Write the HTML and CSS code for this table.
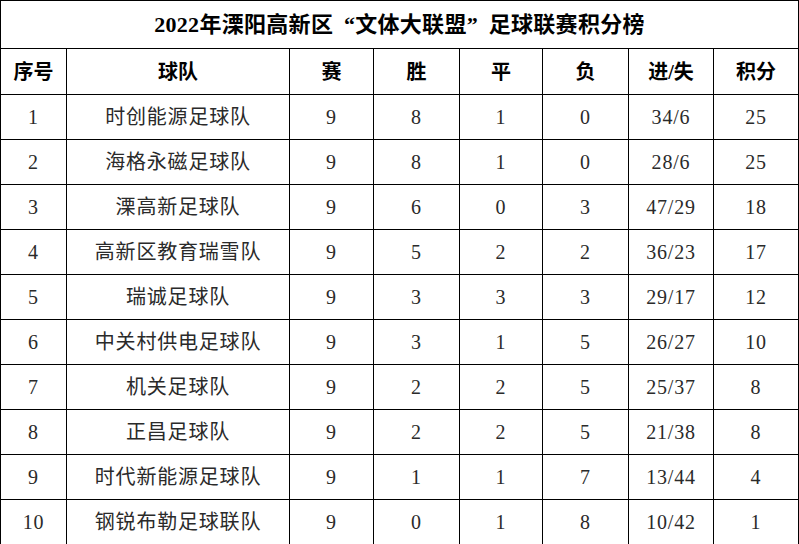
FILE: index.html
```html
<!DOCTYPE html>
<html lang="zh-CN">
<head>
<meta charset="utf-8">
<link rel="stylesheet" href="styles.css">
</head>
<body>
<table class="board">
  <colgroup>
    <col class="c1"><col class="c2"><col class="c3"><col class="c4"><col class="c5"><col class="c6"><col class="c7"><col class="c8">
  </colgroup>
  <tr class="title"><td colspan="8">2022年溧阳高新区<span class="ql">“</span>文体大联盟<span class="qr">”</span>足球联赛积分榜</td></tr>
  <tr class="head"><td>序号</td><td>球队</td><td>赛</td><td>胜</td><td>平</td><td>负</td><td>进/失</td><td>积分</td></tr>
  <tr class="row"><td>1</td><td>时创能源足球队</td><td>9</td><td>8</td><td>1</td><td>0</td><td>34/6</td><td>25</td></tr>
  <tr class="row"><td>2</td><td>海格永磁足球队</td><td>9</td><td>8</td><td>1</td><td>0</td><td>28/6</td><td>25</td></tr>
  <tr class="row"><td>3</td><td>溧高新足球队</td><td>9</td><td>6</td><td>0</td><td>3</td><td>47/29</td><td>18</td></tr>
  <tr class="row"><td>4</td><td>高新区教育瑞雪队</td><td>9</td><td>5</td><td>2</td><td>2</td><td>36/23</td><td>17</td></tr>
  <tr class="row"><td>5</td><td>瑞诚足球队</td><td>9</td><td>3</td><td>3</td><td>3</td><td>29/17</td><td>12</td></tr>
  <tr class="row"><td>6</td><td>中关村供电足球队</td><td>9</td><td>3</td><td>1</td><td>5</td><td>26/27</td><td>10</td></tr>
  <tr class="row"><td>7</td><td>机关足球队</td><td>9</td><td>2</td><td>2</td><td>5</td><td>25/37</td><td>8</td></tr>
  <tr class="row"><td>8</td><td>正昌足球队</td><td>9</td><td>2</td><td>2</td><td>5</td><td>21/38</td><td>8</td></tr>
  <tr class="row"><td>9</td><td>时代新能源足球队</td><td>9</td><td>1</td><td>1</td><td>7</td><td>13/44</td><td>4</td></tr>
  <tr class="row"><td>10</td><td>钢锐布勒足球联队</td><td>9</td><td>0</td><td>1</td><td>8</td><td>10/42</td><td>1</td></tr>
</table>
</body>
</html>
```

FILE: styles.css
```css
html, body {
  margin: 0;
  padding: 0;
  background: #ffffff;
}
.board {
  border-collapse: collapse;
  table-layout: fixed;
  width: 799px;
  font-family: "Liberation Serif", "Noto Sans CJK SC", serif;
  color: #2a2a2a;
}
.board td {
  border: 1px solid #000;
  padding: 0;
  text-align: center;
  vertical-align: middle;
  font-size: 20px;
  line-height: 1;
}
.c1 { width: 66px; }
.c2 { width: 223px; }
.c3 { width: 84px; }
.c4 { width: 86px; }
.c5 { width: 83px; }
.c6 { width: 86px; }
.c7 { width: 85px; }
.c8 { width: 85px; }
.title td {
  height: 47px;
  font-size: 22px;
  font-weight: bold;
  color: #000;
  letter-spacing: 0.3px;
}
.ql, .qr {
  display: inline-block;
  width: 1em;
}
.ql { text-align: right; }
.qr { text-align: left; }
.head td {
  height: 45px;
  font-size: 20px;
  font-weight: bold;
  color: #000;
}
.row td {
  height: 44px;
  letter-spacing: 0.8px;
}
```
